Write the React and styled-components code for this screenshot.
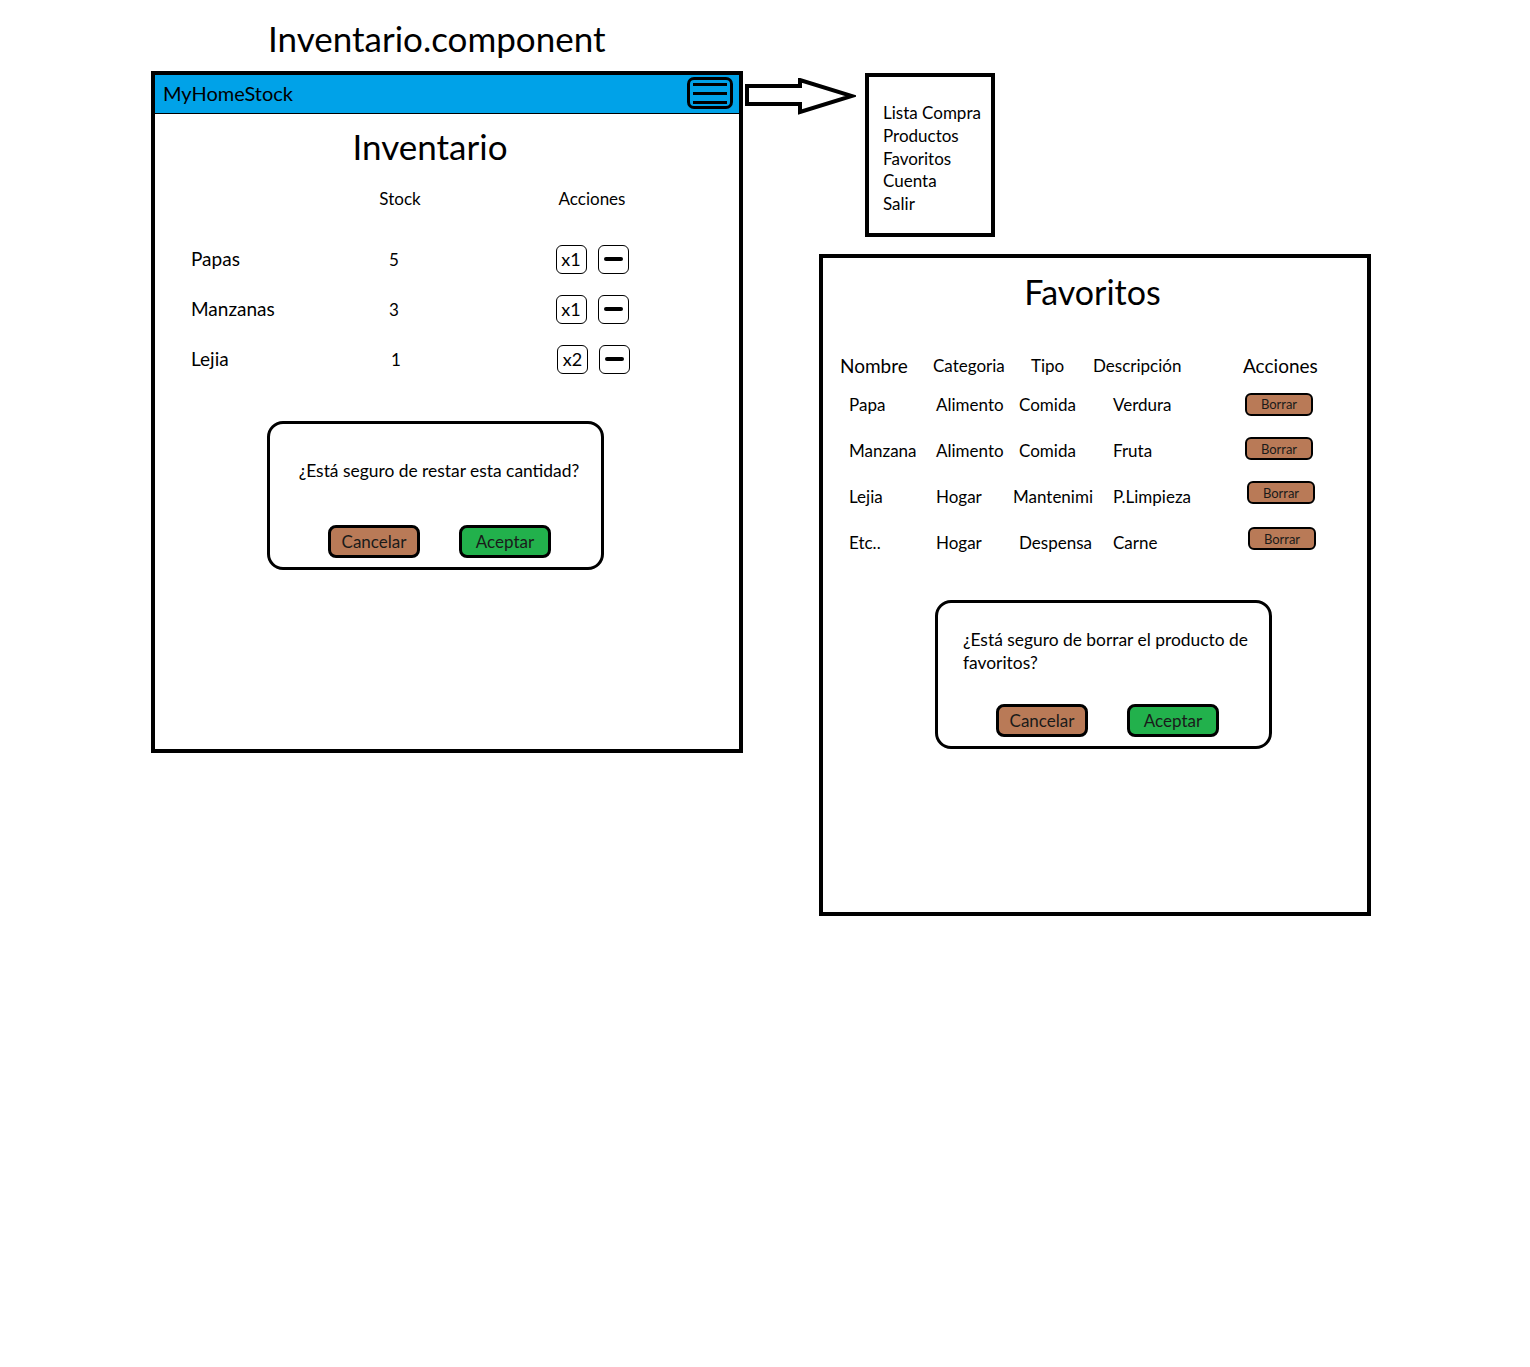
import React from "react";
import styled, { createGlobalStyle } from "styled-components";

const GlobalStyle = createGlobalStyle`
  body {
    margin: 0;
    background: #fff;
    color: #000;
    font-family: Lato, "Noto Sans", sans-serif;
  }
`;

const BROWN = "#b97a57";
const GREEN = "#22b14c";

const Page = styled.div`
  display: flex;
  align-items: flex-start;
  min-height: 1367px;
  padding-left: 151px;
  box-sizing: border-box;
`;

const LeftColumn = styled.div`
  width: 592px;
`;

const RightColumn = styled.div`
  margin-left: 1px;
  padding-top: 73px;
`;

const CanvasTitle = styled.h1`
  margin: 0;
  height: 71px;
  padding: 18px 0 0 117px;
  box-sizing: border-box;
  font-size: 35px;
  line-height: 40px;
  font-weight: 400;
`;

const Frame = styled.div`
  width: ${(p) => p.$w}px;
  height: ${(p) => p.$h}px;
  border: 4px solid #000;
  box-sizing: border-box;
  display: flex;
  flex-direction: column;
`;

const AppBar = styled.div`
  height: 39px;
  flex-shrink: 0;
  background: #00a2e8;
  border-bottom: 1px solid #000;
  box-sizing: border-box;
  display: flex;
  align-items: flex-start;
  justify-content: space-between;
  padding: 2px 6px 0 8px;
`;

const Brand = styled.span`
  font-size: 20px;
  line-height: 33px;
`;

const MenuButton = styled.div`
  width: 46px;
  height: 32px;
  border: 3px solid #000;
  border-radius: 7px;
  box-sizing: border-box;
  display: flex;
  flex-direction: column;
  justify-content: center;
  gap: 6px;
  padding: 0 3px;

  span {
    height: 3px;
    background: #000;
  }
`;

const ScreenTitle = styled.h2`
  margin: ${(p) => p.$top}px 0 0;
  padding-right: ${(p) => p.$shift}px;
  text-align: center;
  font-size: ${(p) => p.$size}px;
  line-height: 40px;
  font-weight: 400;
`;

const StockTable = styled.div`
  display: grid;
  grid-template-columns: 169px 80px 100px 104px;
  grid-auto-rows: 50px;
  align-items: center;
  margin-top: 18px;
  padding-left: 36px;
`;

const HeadCell = styled.div`
  align-self: start;
  line-height: 30px;
  font-size: 17px;
  text-align: ${(p) => (p.$center ? "center" : "left")};
`;

const NameCell = styled.div`
  font-size: 19px;
  margin-top: -2px;
`;

const NumberCell = styled.div`
  font-size: 17px;
  padding-left: ${(p) => p.$indent}px;
`;

const ActionCell = styled.div`
  display: flex;
  justify-content: center;
  gap: 11px;
  padding-left: ${(p) => p.$indent || 0}px;
`;

const SquareButton = styled.div`
  width: 31px;
  height: 29px;
  border: 1px solid #000;
  border-radius: 6px;
  box-sizing: border-box;
  display: flex;
  align-items: center;
  justify-content: center;
  font-size: 18px;

  i {
    width: 19px;
    height: 4px;
    border-radius: 2px;
    background: #000;
  }
`;

const Dialog = styled.div`
  width: 337px;
  height: 149px;
  margin: ${(p) => p.$top}px 0 0 112px;
  border: 3px solid #000;
  border-radius: 16px;
  box-sizing: border-box;
  display: flex;
  flex-direction: column;
  padding: ${(p) => p.$padTop}px 0 9px;
`;

const DialogText = styled.p`
  margin: 0;
  font-size: 17.4px;
  line-height: 23px;
  text-align: ${(p) => (p.$center ? "center" : "left")};
  padding-left: ${(p) => p.$indent}px;
`;

const DialogButtons = styled.div`
  margin-top: auto;
  display: flex;
  justify-content: center;
  gap: 39px;
  padding-left: 8px;
`;

const ActionButton = styled.div`
  width: 92px;
  height: 33px;
  border: 3px solid #000;
  border-radius: 8px;
  box-sizing: border-box;
  background: ${(p) => p.$tone};
  display: flex;
  align-items: center;
  justify-content: center;
  font-size: 17px;
  color: #1a1a1a;
`;

const MenuRow = styled.div`
  display: flex;
  align-items: flex-start;
  gap: 9px;

  svg {
    margin-top: 5px;
    flex-shrink: 0;
  }
`;

const MenuBox = styled.div`
  width: 130px;
  height: 164px;
  border: 4px solid #000;
  box-sizing: border-box;
  padding: 25px 0 0 14px;
  font-size: 17px;
  line-height: 22.75px;
`;

const FavFrameSlot = styled.div`
  margin: 17px 0 0 75px;
`;

const FavTable = styled.div`
  display: grid;
  grid-template-columns: 93px 80px 80px 150px 1fr;
  grid-template-rows: 32px repeat(4, 46px);
  align-items: center;
  margin-top: 37px;
  padding-left: 17px;
`;

const FavCell = styled.div`
  font-size: ${(p) => p.$size || 17}px;
  padding-left: ${(p) => p.$indent || 0}px;
  white-space: nowrap;
`;

const BorrarButton = styled.div`
  width: 68px;
  height: 23px;
  margin-left: ${(p) => p.$indent}px;
  margin-bottom: ${(p) => p.$raise * 2}px;
  border: 2px solid #000;
  border-radius: 6px;
  box-sizing: border-box;
  background: ${BROWN};
  display: flex;
  align-items: center;
  justify-content: center;
  font-size: 13px;
  color: #1a1a1a;
`;

const Arrow = () => (
  <svg width="112" height="37" viewBox="0 0 112 37">
    <polygon
      points="3,8 56,8 56,2 108,18 56,34 56,26 3,26"
      fill="#fff"
      stroke="#000"
      strokeWidth="4"
      strokeLinejoin="miter"
    />
  </svg>
);

const stock = [
  { name: "Papas", qty: 5, step: "x1", numIndent: 29, shift: 0 },
  { name: "Manzanas", qty: 3, step: "x1", numIndent: 29, shift: 0 },
  { name: "Lejia", qty: 1, step: "x2", numIndent: 31, shift: 3 },
];

const favoritos = [
  { name: "Papa", cat: "Alimento", tipo: "Comida", desc: "Verdura", tipoIndent: 6, btn: 2, raise: 0 },
  { name: "Manzana", cat: "Alimento", tipo: "Comida", desc: "Fruta", tipoIndent: 6, btn: 2, raise: 1.5 },
  { name: "Lejia", cat: "Hogar", tipo: "Mantenimi", desc: "P.Limpieza", tipoIndent: 0, btn: 4, raise: 3.3 },
  { name: "Etc..", cat: "Hogar", tipo: "Despensa", desc: "Carne", tipoIndent: 6, btn: 5, raise: 3.5 },
];

const menuItems = ["Lista Compra", "Productos", "Favoritos", "Cuenta", "Salir"];

export default function App() {
  return (
    <>
      <GlobalStyle />
      <Page>
        <LeftColumn>
          <CanvasTitle>Inventario.component</CanvasTitle>
          <Frame $w={592} $h={682}>
            <AppBar>
              <Brand>MyHomeStock</Brand>
              <MenuButton>
                <span />
                <span />
                <span />
              </MenuButton>
            </AppBar>
            <ScreenTitle $top={12} $shift={34} $size={35}>
              Inventario
            </ScreenTitle>
            <StockTable>
              <div />
              <HeadCell $center>Stock</HeadCell>
              <div />
              <HeadCell $center>Acciones</HeadCell>
              {stock.map((row) => (
                <React.Fragment key={row.name}>
                  <NameCell>{row.name}</NameCell>
                  <NumberCell $indent={row.numIndent}>{row.qty}</NumberCell>
                  <div />
                  <ActionCell $indent={row.shift}>
                    <SquareButton>{row.step}</SquareButton>
                    <SquareButton>
                      <i />
                    </SquareButton>
                  </ActionCell>
                </React.Fragment>
              ))}
            </StockTable>
            <Dialog $top={37} $padTop={35}>
              <DialogText $center $indent={7}>
                ¿Está seguro de restar esta cantidad?
              </DialogText>
              <DialogButtons>
                <ActionButton $tone={BROWN}>Cancelar</ActionButton>
                <ActionButton $tone={GREEN}>Aceptar</ActionButton>
              </DialogButtons>
            </Dialog>
          </Frame>
        </LeftColumn>

        <RightColumn>
          <MenuRow>
            <Arrow />
            <MenuBox>
              {menuItems.map((item) => (
                <div key={item}>{item}</div>
              ))}
            </MenuBox>
          </MenuRow>
          <FavFrameSlot>
            <Frame $w={552} $h={662}>
              <ScreenTitle $top={14} $shift={5} $size={34}>
                Favoritos
              </ScreenTitle>
              <FavTable>
                <FavCell $size={19}>Nombre</FavCell>
                <FavCell>Categoria</FavCell>
                <FavCell $indent={18}>Tipo</FavCell>
                <FavCell>Descripción</FavCell>
                <FavCell $size={19}>Acciones</FavCell>
                {favoritos.map((row) => (
                  <React.Fragment key={row.name}>
                    <FavCell $indent={9}>{row.name}</FavCell>
                    <FavCell $indent={3}>{row.cat}</FavCell>
                    <FavCell $indent={row.tipoIndent}>{row.tipo}</FavCell>
                    <FavCell $indent={20}>{row.desc}</FavCell>
                    <BorrarButton $indent={row.btn} $raise={row.raise}>
                      Borrar
                    </BorrarButton>
                  </React.Fragment>
                ))}
              </FavTable>
              <Dialog $top={35} $padTop={25}>
                <DialogText $indent={25}>
                  ¿Está seguro de borrar el producto de
                  <br />
                  favoritos?
                </DialogText>
                <DialogButtons>
                  <ActionButton $tone={BROWN}>Cancelar</ActionButton>
                  <ActionButton $tone={GREEN}>Aceptar</ActionButton>
                </DialogButtons>
              </Dialog>
            </Frame>
          </FavFrameSlot>
        </RightColumn>
      </Page>
    </>
  );
}
